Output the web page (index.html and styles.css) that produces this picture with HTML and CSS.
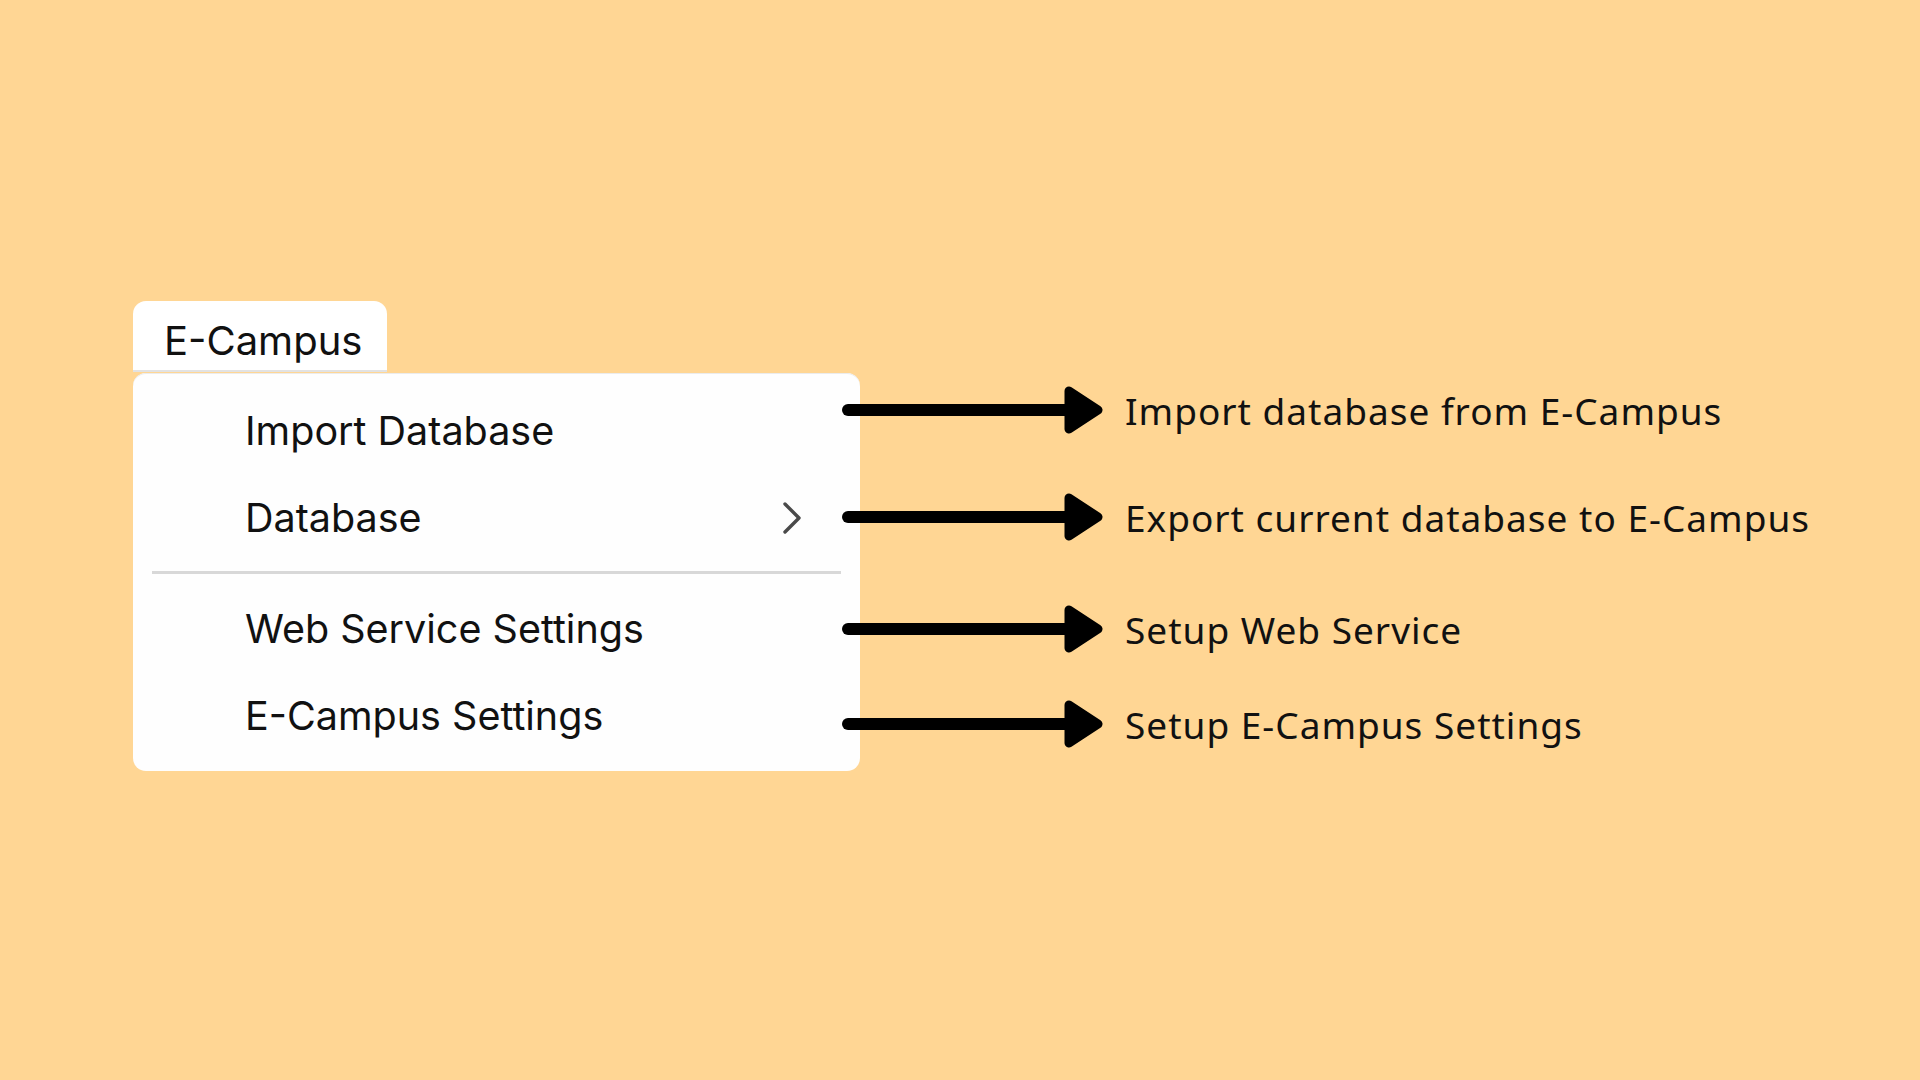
FILE: index.html
```html
<!DOCTYPE html>
<html lang="en">
<head>
  <meta charset="UTF-8" />
  <meta name="viewport" content="width=device-width, initial-scale=1.0"/>
  <title>E-Campus Menu</title>
  <link rel="stylesheet" href="styles.css">
</head>
<body>

  <main class="scene">

    <!-- menu bar tab + dropdown -->
    <div class="menu-wrap">
      <div class="menu-tab">E-Campus</div>
      <ul class="menu">
        <li class="menu-item">Import Database</li>
        <li class="menu-item has-sub">
          Database
          <svg class="chevron" width="20" height="34" viewBox="0 0 20 34">
            <polyline points="3,3 17,17 3,31" fill="none" stroke="#4a4a4a" stroke-width="3.4" stroke-linecap="round" stroke-linejoin="round"/>
          </svg>
        </li>
        <li class="menu-sep"></li>
        <li class="menu-item">Web Service Settings</li>
        <li class="menu-item">E-Campus Settings</li>
      </ul>
    </div>

    <!-- what each entry does -->
    <ul class="notes">
      <li class="note">
        <svg class="arrow" width="262" height="48" viewBox="0 0 262 48">
          <line x1="6" y1="24" x2="228" y2="24" stroke="#000" stroke-width="12" stroke-linecap="round"/>
          <polygon points="227,5 256,24 227,43" fill="#000" stroke="#000" stroke-width="9" stroke-linejoin="round"/>
        </svg>
        <span>Import database from E-Campus</span>
      </li>
      <li class="note">
        <svg class="arrow" width="262" height="48" viewBox="0 0 262 48">
          <line x1="6" y1="24" x2="228" y2="24" stroke="#000" stroke-width="12" stroke-linecap="round"/>
          <polygon points="227,5 256,24 227,43" fill="#000" stroke="#000" stroke-width="9" stroke-linejoin="round"/>
        </svg>
        <span>Export current database to E-Campus</span>
      </li>
      <li class="note">
        <svg class="arrow" width="262" height="48" viewBox="0 0 262 48">
          <line x1="6" y1="24" x2="228" y2="24" stroke="#000" stroke-width="12" stroke-linecap="round"/>
          <polygon points="227,5 256,24 227,43" fill="#000" stroke="#000" stroke-width="9" stroke-linejoin="round"/>
        </svg>
        <span>Setup Web Service</span>
      </li>
      <li class="note">
        <svg class="arrow" width="262" height="48" viewBox="0 0 262 48">
          <line x1="6" y1="24" x2="228" y2="24" stroke="#000" stroke-width="12" stroke-linecap="round"/>
          <polygon points="227,5 256,24 227,43" fill="#000" stroke="#000" stroke-width="9" stroke-linejoin="round"/>
        </svg>
        <span>Setup E-Campus Settings</span>
      </li>
    </ul>

  </main>

</body>
</html>
```

FILE: styles.css
```css
* {
  margin: 0;
  padding: 0;
  box-sizing: border-box;
}

body {
  background-color: #ffd694;
  min-height: 100vh;
  font-family: "Inter", "Liberation Sans", sans-serif;
}

.scene {
  display: flex;
  align-items: flex-start;
  padding: 301px 0 0 133px;
}

/* ---- menu ---- */

.menu-wrap {
  width: 727px;
  flex-shrink: 0;
}

.menu-tab {
  width: 254px;
  height: 71px;
  padding: 9px 0 0 31px;
  display: flex;
  align-items: center;
  background-color: #ffffff;
  border-radius: 13px 13px 0 0;
  border-bottom: 2px solid #e2e2e2;
  font-size: 40px;
  color: #111111;
}

.menu {
  list-style: none;
  margin-top: 1px;
  padding: 14px 0 12px;
  background-color: #fefefe;
  border-radius: 13px;
  box-shadow: inset 0 1px 0 #ececec;
}

.menu-item {
  height: 87px;
  padding: 0 59px 0 112px;
  display: flex;
  align-items: center;
  font-size: 39.5px;
  color: #111111;
}

.menu-item.has-sub {
  justify-content: space-between;
}

.chevron {
  display: block;
  margin-right: -1px;
}

.menu-sep {
  height: 3px;
  margin: 10px 19px 11px;
  background-color: #d8d8d8;
}

/* ---- notes ---- */

.notes {
  list-style: none;
  margin-left: -18px;
  padding-top: 85px;
}

.note {
  height: 48px;
  display: flex;
  align-items: center;
  gap: 21px;
  font-family: "Noto Sans", "Open Sans", sans-serif;
  font-size: 37px;
  letter-spacing: 1px;
  color: #111111;
  white-space: nowrap;
}

.note:nth-child(2) {
  margin-top: 59px;
}

.note:nth-child(3) {
  margin-top: 64px;
}

.note:nth-child(4) {
  margin-top: 47px;
}

.arrow {
  display: block;
  flex-shrink: 0;
}
```
